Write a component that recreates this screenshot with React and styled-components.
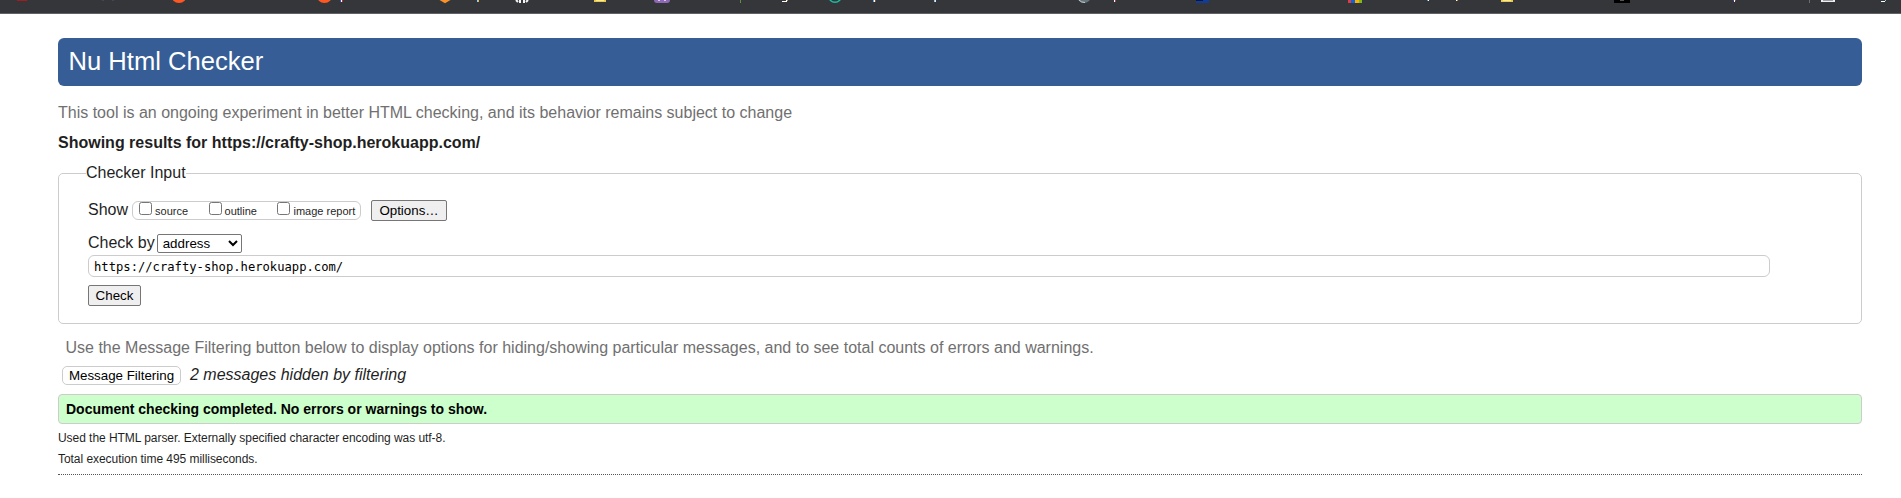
import React from "react";
import styled, { createGlobalStyle } from "styled-components";

const Global = createGlobalStyle`
  * { box-sizing: border-box; }
  body { margin: 0; background: #fff; color: #1f1f1f; font: 16px/20px "Liberation Sans", Arial, sans-serif; }
`;

const BookmarksBar = styled.header`
  height: 14px;
  background: #35363a;
  border-bottom: 1px solid #5f6368;
  overflow: hidden;
`;
const Favicons = styled.svg`
  display: block;
`;
const Page = styled.main`
  padding: 24px 39px 0 58px;
`;
const Banner = styled.h1`
  margin: 0;
  height: 48px;
  padding: 0 10.5px;
  border-radius: 6px;
  background: #365d95;
  color: #fff;
  font-size: 25.6px;
  font-weight: 400;
  line-height: 46px;
`;
const Note = styled.p`
  margin: 0;
  padding: ${(p) => p.$pad};
  color: #707070;
`;
const ResultsHeading = styled.h2`
  margin: 10px 0 0;
  font-size: 16px;
  line-height: 20px;
  font-weight: 700;
`;
const CheckerForm = styled.fieldset`
  margin: 10px 0 0;
  height: 161px;
  padding: 17px 91px 0 29px;
  min-width: 0;
  border: 1px solid #ccc;
  border-radius: 5px;
`;
const Legend = styled.legend`
  margin-left: -2px;
  padding: 0;
  line-height: 20px;
`;
const Row = styled.div`
  display: flex;
  align-items: center;
  height: ${(p) => p.$height};
  margin-top: ${(p) => p.$gap || "0"};
`;
const RowLabel = styled.span`
  padding-bottom: 2px;
`;
const OptionGroup = styled.div`
  display: flex;
  gap: 20.5px;
  width: 229px;
  height: 19px;
  margin: 0 10px 0 4px;
  padding: 0 6px;
  border: 1px solid #ccc;
  border-radius: 6px;
`;
const OptionLabel = styled.label`
  display: flex;
  font-size: 11px;
  line-height: 18px;
  white-space: nowrap;
`;
const Checkbox = styled.input`
  width: 13px;
  height: 13px;
  margin: 0 3px 0 0;
`;
const Button = styled.button`
  height: 21px;
  width: ${(p) => p.$width};
  padding: 0;
  border: 1px solid #767676;
  border-radius: 2px;
  background: #efefef;
  color: #000;
  font: 13.333px "Liberation Sans", Arial, sans-serif;
`;
const FilterButton = styled(Button)`
  height: 19px;
  background: #fff;
  border-color: #ccc;
  border-radius: 5px;
`;
const MethodSelect = styled.select`
  width: 85px;
  height: 19px;
  margin-left: 2px;
  padding: 0 1px;
  border: 1px solid #767676;
  border-radius: 2px;
  background: #fff;
  color: #000;
  font: 13.333px "Liberation Sans", Arial, sans-serif;
`;
const AddressInput = styled.input`
  display: block;
  width: 100%;
  height: 22px;
  margin: 2px 0 8px;
  padding: 2px 5px 0;
  border: 1px solid #ccc;
  border-radius: 6px;
  color: #000;
  font: 12.18px "DejaVu Sans Mono", monospace;
`;
const Filtering = styled.div`
  display: flex;
  align-items: center;
  gap: 9px;
  height: 20px;
  padding-left: 4px;
  font-style: italic;
`;
const Success = styled.p`
  margin: 9px 0 0;
  height: 30px;
  padding: 0 7px;
  border: 1px solid #ccc;
  border-radius: 4px;
  background: #cfc;
  color: #000;
  font-size: 14px;
  font-weight: 700;
  line-height: 28px;
`;
const Details = styled.footer`
  padding: 4px 0;
  border-bottom: 1px dotted #555;
  font-size: 12px;
  letter-spacing: -0.05px;
  line-height: 21px;
`;

/* Bookmark icons and descenders that reach into the visible strip: [x, y, width, height, colour] */
const marks = [
  [17, 0, 10, 1, "#a61c1c"], [102, 0, 2, 1, "#3f4658"], [112, 0, 2, 1, "#3f4658"],
  [340, 0, 1, 2, "#4747c8"], [341, 0, 1, 2, "#fff"], [342, 0, 1, 2, "#a33b3b"],
  [477, 0, 1, 2, "#9ed2ee"], [478, 0, 1, 2, "#d8b45a"],
  [594, 0, 12, 2, "#e8c94c"], [596, 0, 8, 1, "#ffe99a"],
  [658, 0, 2, 1, "#d9c8ec"], [664, 0, 2, 1, "#d9c8ec"],
  [740, 0, 1, 3, "#5f8f45"],
  [782, 1, 5, 1, "#fff"], [786, 0, 1, 1, "#fff"], [787, 0, 1, 1, "#d89a4a"],
  [873, 0, 1, 2, "#6aa8dc"], [874, 0, 1, 2, "#fff"], [875, 0, 1, 2, "#7a5a3a"],
  [934, 0, 1, 2, "#8fcbf0"], [935, 0, 1, 2, "#e6e6e6"],
  [1114, 0, 1, 2, "#fff"], [1115, 0, 1, 2, "#a04848"],
  [1196, 0, 13, 3, "#123c96"], [1196, 0, 7, 1, "#06153f"],
  [1348, 0, 3, 3, "#e63946"], [1351, 0, 4, 3, "#0a63d8"], [1355, 0, 4, 3, "#fbb103"], [1359, 0, 3, 3, "#7fb81b"],
  [1427, 0, 1, 1, "#4c9bd0"], [1428, 0, 1, 1, "#fff"],
  [1456, 0, 1, 1, "#fff"], [1457, 0, 1, 1, "#c98a3a"],
  [1501, 0, 12, 2, "#e8c94c"], [1503, 0, 8, 1, "#ffe99a"],
  [1614, 0, 16, 3, "#000"], [1620, 0, 4, 1, "#555"],
  [1733, 0, 1, 1, "#4141c4"], [1734, 0, 1, 2, "#fff"], [1735, 0, 1, 1, "#b54040"],
  [1809, 0, 1, 3, "#6b6d71"],
  [1821, 0, 14, 2, "#eceef2"], [1823, 0, 10, 1, "#9b9da3"],
  [1881, 1, 4, 1, "#fff"], [1885, 0, 1, 1, "#8fcbf0"],
];

function BookmarkIcons() {
  return (
    <Favicons width="1901" height="13" viewBox="0 0 1901 13" aria-hidden="true">
      <circle cx="179" cy="-5" r="8" fill="#ff5722" />
      <circle cx="324.5" cy="-5" r="8" fill="#ff5722" />
      <path d="M439.5 0h11l-5.5 3.2z" fill="#fb9128" />
      <path d="M516 0l2 2m2-2v3M528 0l-2 2m-2-2v3" stroke="#f4f4f4" strokeWidth="2" fill="none" />
      <path d="M654 0h16q0 3-3 3h-10q-3 0-3-3z" fill="#8e68b2" />
      <circle cx="835" cy="-4" r="6.3" stroke="#18bfa2" strokeWidth="1.4" fill="none" />
      <circle cx="1084" cy="-4" r="7" fill="#64747b" />
      <path d="M1079 0q2 2.5 6 2.5" stroke="#c4cdd1" fill="none" />
      {marks.map(([x, y, width, height, fill]) => (
        <rect key={`${x}-${y}-${width}`} x={x} y={y} width={width} height={height} fill={fill} />
      ))}
    </Favicons>
  );
}

export default function App() {
  return (
    <>
      <Global />
      <BookmarksBar><BookmarkIcons /></BookmarksBar>
      <Page>
        <Banner>Nu Html Checker</Banner>
        <Note $pad="17px 0 0">This tool is an ongoing experiment in better HTML checking, and its behavior remains subject to change</Note>
        <ResultsHeading>Showing results for https://crafty-shop.herokuapp.com/</ResultsHeading>
        <CheckerForm>
          <Legend>Checker Input</Legend>
          <Row $height="21px">
            <RowLabel>Show</RowLabel>
            <OptionGroup>
              {["source", "outline", "image report"].map((name) => (
                <OptionLabel key={name}><Checkbox type="checkbox" />{name}</OptionLabel>
              ))}
            </OptionGroup>
            <Button $width="76px">Options…</Button>
          </Row>
          <Row $height="19px" $gap="13px">
            <RowLabel>Check by</RowLabel>
            <MethodSelect defaultValue="address"><option>address</option></MethodSelect>
          </Row>
          <AddressInput defaultValue="https://crafty-shop.herokuapp.com/" />
          <Button $width="53px">Check</Button>
        </CheckerForm>
        <Note $pad="14px 7.5px 7px">Use the Message Filtering button below to display options for hiding/showing particular messages, and to see total counts of errors and warnings.</Note>
        <Filtering><FilterButton $width="119px">Message Filtering</FilterButton>2 messages hidden by filtering</Filtering>
        <Success>Document checking completed. No errors or warnings to show.</Success>
        <Details>
          <div>Used the HTML parser. Externally specified character encoding was utf-8.</div>
          <div>Total execution time 495 milliseconds.</div>
        </Details>
      </Page>
    </>
  );
}
